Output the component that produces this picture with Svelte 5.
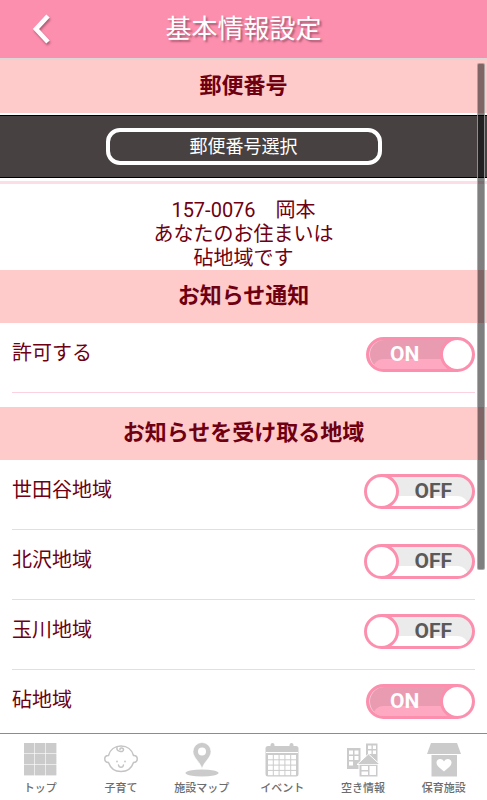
<script lang="ts">
  type Area = { id: string; name: string; on: boolean };

  let notify = $state(true);
  let areas = $state<Area[]>([
    { id: "setagaya", name: "世田谷地域", on: false },
    { id: "kitazawa", name: "北沢地域", on: false },
    { id: "tamagawa", name: "玉川地域", on: false },
    { id: "kinuta", name: "砧地域", on: true },
  ]);

  const tabs = [
    { id: "top", label: "トップ" },
    { id: "child", label: "子育て" },
    { id: "map", label: "施設マップ" },
    { id: "event", label: "イベント" },
    { id: "vacancy", label: "空き情報" },
    { id: "nursery", label: "保育施設" },
  ];
</script>

{#snippet toggle(on: boolean)}
  <span class="track" class:on>
    <span class="state">{on ? "ON" : "OFF"}</span>
    <span class="knob"></span>
  </span>
{/snippet}

<div class="app">
  <header>
    <button class="back" aria-label="戻る">
      <svg width="24" height="34" viewBox="0 0 24 34">
        <path d="M20 4 L8 17 L20 30" fill="none" stroke="#fff" stroke-width="4.6" />
      </svg>
    </button>
    <h1>基本情報設定</h1>
  </header>

  <div class="body">
    <main>
      <h2>郵便番号</h2>
      <div class="zip-bar">
        <button class="zip-button">郵便番号選択</button>
      </div>
      <p class="address">
        157-0076　岡本<br />
        あなたのお住まいは<br />
        砧地域です
      </p>

      <h2>お知らせ通知</h2>
      <div class="rows last">
        <label class="row">
          <span class="name">許可する</span>
          <input type="checkbox" role="switch" bind:checked={notify} />
          {@render toggle(notify)}
        </label>
      </div>

      <h2>お知らせを受け取る地域</h2>
      <div class="rows">
        {#each areas as area (area.id)}
          <label class="row">
            <span class="name">{area.name}</span>
            <input type="checkbox" role="switch" bind:checked={area.on} />
            {@render toggle(area.on)}
          </label>
        {/each}
      </div>
    </main>
    <div class="scroll-thumb"></div>
  </div>

  <nav>
    {#each tabs as tab (tab.id)}
      <a href="#{tab.id}">
        <svg width="36" height="36" viewBox="0 0 36 36" fill="#cbcbcb">
          {#if tab.id === "top"}
            {#each [1, 12, 23] as y}
              {#each [2, 13, 24] as x}
                <rect {x} {y} width="10.4" height="10.4" />
              {/each}
            {/each}
          {:else if tab.id === "child"}
            <g fill="none" stroke="#c4c4c4" stroke-width="1.5" stroke-linecap="round">
              <path d="M5.5 13.5 C7 7.5 12 4 18 4 S29 7.5 30.5 13.5 C35.5 13 35.5 20.5 30.5 20.5 C28.5 26.5 23.5 29.5 18 29.5 S7.5 26.5 5.5 20.5 C.5 20.5 .5 13 5.5 13.5" />
              <path d="M14 5.5 C13 9.5 20 11 20.5 8 C20.5 5.5 16.5 5.5 17 7.5" />
              <path d="M15.5 23 C16 26 20 26 20.5 23" />
            </g>
            <circle cx="14" cy="19.5" r="1" />
            <circle cx="22" cy="19.5" r="1" />
          {:else if tab.id === "map"}
            <ellipse cx="18" cy="31" rx="16.5" ry="3.5" />
            <path d="M18 27 C16.5 20 9 16 9 9.5 A9 9 0 0 1 27 9.5 C27 16 19.5 20 18 27 Z" stroke="#fff" stroke-width=".6" />
            <circle cx="18" cy="9.5" r="4" fill="#fff" />
          {:else if tab.id === "event"}
            <rect x="1.5" y="4" width="33" height="30.5" rx="2.5" />
            <rect x="6.5" y="1" width="4" height="6" rx="2" />
            <rect x="25.5" y="1" width="4" height="6" rx="2" />
            <path d="M2 10.5 H34" stroke="#fff" />
            {#each [13, 18.3, 23.6, 28.9] as y}
              {#each [4, 9.8, 15.6, 21.4, 27.2] as x}
                <rect {x} {y} width="4.8" height="4.3" fill="#fff" />
              {/each}
            {/each}
          {:else if tab.id === "vacancy"}
            <path d="M2 6 H15.5 V27 H2 Z M21 1.5 H32.5 V22 H21 Z" />
            <path
              fill="#fff"
              d="M4 8.5h4v4h-4z M9.5 8.5h4v4h-4z M4 14h4v4h-4z M9.5 14h4v4h-4z M4 19.5h4v4h-4z M23 3.5h3.5v3.5h-3.5z M27.800 3.5h3.2v3.5h-3.2z M23 8.5h3.5v3.5h-3.5z M27.800 8.5h3.2v3.5h-3.2z"
            />
            <path d="M23.5 12 L35 22.5 H33 V35 H14 V22.5 H12 Z" stroke="#fff" />
            <path d="M16.500 24 H23 V28 H16.500 Z M16.500 29.500 H23 V33 H16.500 Z M24.500 24 H31 V33 H24.500 Z" fill="#fff" />
            <path d="M14 22.500 H33" stroke="#fff" stroke-width=".8" />
          {:else}
            <path d="M5 1 H31 L35 12 H1 Z" />
            <path d="M5.5 13 H31 V34.5 H5.5 Z" />
            <path d="M18 29.5 C14 26 10.5 24 10.5 20.5 C10.5 16.5 16 15.5 18 19.5 C20 15.5 25.5 16.5 25.5 20.5 C25.5 24 22 26 18 29.5 Z" fill="#fff" />
          {/if}
        </svg>
        <span>{tab.label}</span>
      </a>
    {/each}
  </nav>
</div>

<style>
  :global(body) {
    background: #fff;
  }

  .app {
    height: 100vh;
    display: flex;
    flex-direction: column;
    font-family: Roboto, "Noto Sans CJK JP", sans-serif;
    color: #6e0012;
  }

  button {
    font-family: inherit;
    cursor: pointer;
  }

  header {
    display: grid;
    grid-template-columns: 80px 1fr 80px;
    align-items: center;
    height: 58px;
    flex-shrink: 0;
    background: #fd8fae;
    border-bottom: 2px solid #dcd6d7;
  }

  .back {
    display: flex;
    justify-content: center;
    padding: 0;
    border: 0;
    background: none;
  }

  .back svg {
    filter: drop-shadow(1px 2px 1px rgba(90, 40, 60, 0.5));
  }

  h1 {
    margin: 0;
    text-align: center;
    font-size: 26px;
    line-height: 56px;
    font-weight: 400;
    color: #fff;
    text-shadow: 2px 2px 2px rgba(90, 40, 60, 0.5);
  }

  .body {
    position: relative;
    flex: 1;
    min-height: 0;
  }

  main {
    height: 100%;
    overflow-y: auto;
    scrollbar-width: none;
  }

  .scroll-thumb {
    position: absolute;
    top: 3px;
    right: 2px;
    width: 6px;
    height: 75%;
    border: 1px solid rgba(190, 190, 190, 0.7);
    border-radius: 2px;
    background: rgba(0, 0, 0, 0.5);
    pointer-events: none;
  }

  h2 {
    margin: 0;
    padding-bottom: 2px;
    background: #fecbca;
    text-align: center;
    font-size: 22px;
    line-height: 51px;
    font-weight: 700;
  }

  .zip-bar {
    display: flex;
    justify-content: center;
    margin: 2px 0 3px;
    padding: 12px;
    border-top: 1px solid #000;
    border-bottom: 1px solid #000;
    background: #474142;
  }

  .zip-button {
    width: 276px;
    height: 37px;
    padding: 0;
    border: 4px solid #fff;
    border-radius: 14px;
    background: #474142;
    color: #fff;
    font-size: 18px;
    line-height: 28px;
  }

  .address {
    margin: 0;
    padding: 14px 0 0;
    border-top: 3px solid #fddde6;
    text-align: center;
    font-size: 20px;
    line-height: 24px;
  }

  .rows {
    padding: 0 12px;
  }

  .rows.last {
    padding-bottom: 14px;
  }

  .row {
    position: relative;
    display: flex;
    justify-content: space-between;
    align-items: flex-start;
    height: 70px;
    box-sizing: border-box;
    padding-top: 14px;
    border-bottom: 1px solid #fbd3de;
    cursor: pointer;
  }

  .name {
    font-size: 20px;
    line-height: 32px;
  }

  /* the native box stays focusable under the drawn switch */
  input {
    position: absolute;
    right: 0;
    opacity: 0;
  }

  .track {
    position: relative;
    width: 111px;
    height: 35px;
    box-sizing: border-box;
    border: 3px solid #fd8fae;
    border-radius: 18px;
    background: #ebebeb;
    overflow: hidden;
  }

  .track::before {
    content: "";
    position: absolute;
    right: 4px;
    bottom: 0;
    left: 4px;
    height: 10px;
    border-radius: 0 12px 0 0;
    background: #fff;
  }

  .track.on {
    width: 109px;
    background: #e89bb1;
    box-shadow: inset 1px 0 0 #fbc9d7;
  }

  .track.on::before {
    border-radius: 12px 0 0 0;
    background: #ffa8c1;
  }

  .state {
    position: absolute;
    top: 0;
    right: 20px;
    font-size: 21px;
    line-height: 28px;
    font-weight: 700;
    color: #5a5a5a;
  }

  .on .state {
    right: auto;
    left: 21px;
    color: #fff;
  }

  .knob {
    position: absolute;
    top: -3px;
    left: -3px;
    width: 35px;
    height: 35px;
    box-sizing: border-box;
    border: 3px solid #fd8fae;
    border-radius: 50%;
    background: #fff;
  }

  .on .knob {
    right: -3px;
    left: auto;
  }

  nav {
    display: grid;
    grid-template-columns: repeat(6, minmax(0, 1fr));
    flex-shrink: 0;
    padding-right: 3px;
    border-top: 1px solid #8c8c8c;
    background: #fff;
  }

  nav a {
    display: flex;
    flex-direction: column;
    align-items: center;
    gap: 2px;
    padding: 8px 0 2px;
    color: #6c6c6c;
    font-size: 11px;
    line-height: 18px;
    font-weight: 500;
    text-decoration: none;
    white-space: nowrap;
  }
</style>
